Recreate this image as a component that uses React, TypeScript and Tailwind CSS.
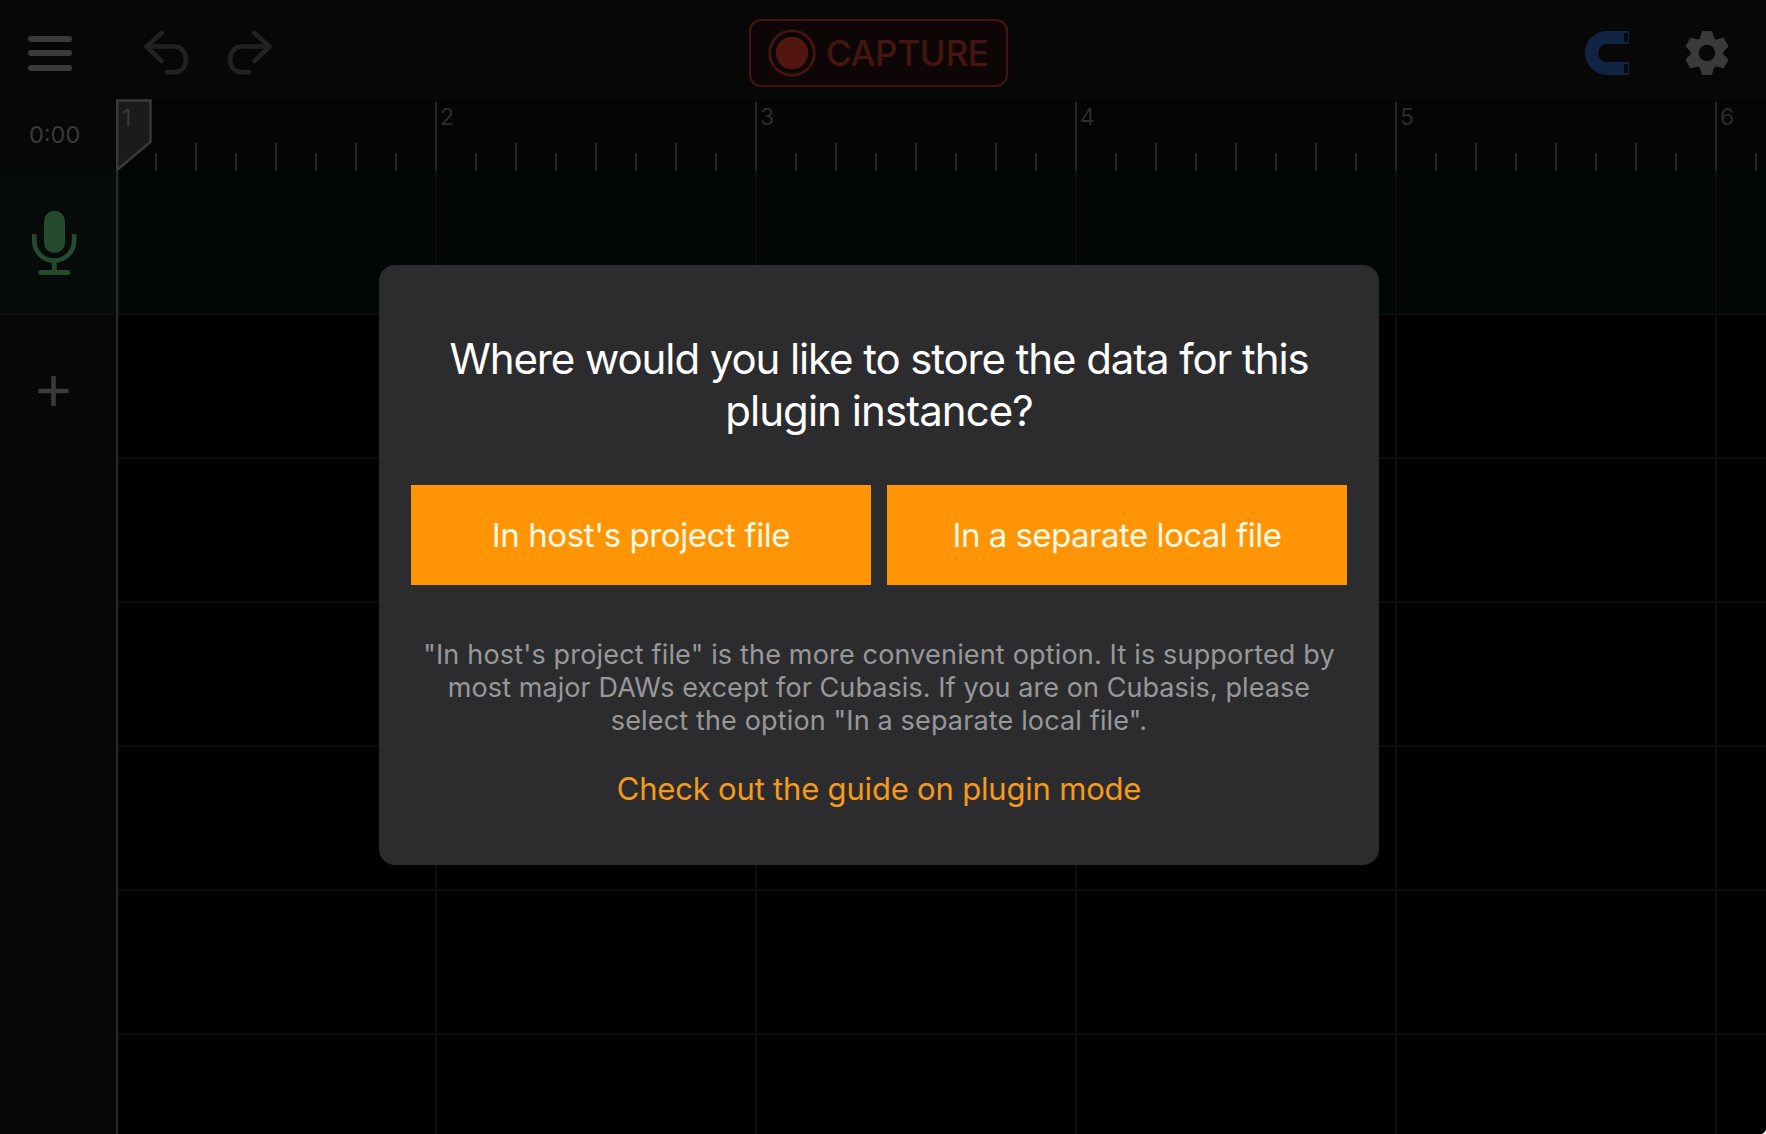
import React from "react";

const SUBDIVISIONS = Array.from({ length: 42 }, (_, i) => i);
const BARS = [1, 2, 3, 4, 5, 6];
const TRACKS = [0, 1, 2, 3, 4, 5, 6];
const GEAR_TEETH = [0, 60, 120, 180, 240, 300];

function UndoIcon({ flip = false }: { flip?: boolean }) {
  return (
    <svg width="46" height="46" viewBox="0 0 46 46" fill="none" stroke="#222222" strokeWidth="4.6" strokeLinecap="round" strokeLinejoin="round" className={flip ? "-scale-x-100" : ""}>
      <path d="M18.5 3 L3.5 16.5 L18.5 31" strokeLinejoin="miter" />
      <path d="M4 16.5 H31 C38 16.5 43 22 43 29.5 C43 37 38 42.3 30.5 42.3 H24" />
    </svg>
  );
}

function CaptureButton() {
  return (
    <button className="flex h-[68px] w-[259px] items-center rounded-[12px] border-2 border-[#451512] bg-[#0e0606] pl-[16.5px]">
      <svg width="48" height="48" viewBox="0 0 48 48">
        <circle cx="24" cy="24" r="22.3" fill="none" stroke="#451512" strokeWidth="2.6" />
        <circle cx="24" cy="24" r="16.2" fill="#521611" />
      </svg>
      <span className="ml-[10.5px] text-[35px] leading-none font-medium tracking-[-0.3px] text-[#451512]">CAPTURE</span>
    </button>
  );
}

function MagnetIcon() {
  return (
    <svg width="44" height="44" viewBox="0 0 44 44">
      <path
        fill="#122444"
        fillRule="evenodd"
        d="M21.5 0 H44 V13 H20.5 A9.2 9.2 0 0 0 20.5 31 H44 V44 H21.5 A21.5 22 0 0 1 21.5 0 Z M39 2 V11 H42.8 V2 Z M39 33 V42 H42.8 V33 Z"
      />
    </svg>
  );
}

function GearIcon() {
  return (
    <svg width="46" height="46" viewBox="-23 -23 46 46" fill="#3a3a3b" stroke="#3a3a3b" strokeLinejoin="round">
      <circle r="12.3" fill="none" strokeWidth="8" />
      {GEAR_TEETH.map((angle) => (
        <path key={angle} transform={`rotate(${angle})`} strokeWidth="2" d="M-4.3 -21 H4.3 L6.2 -14 H-6.2 Z" />
      ))}
    </svg>
  );
}

function Toolbar() {
  return (
    <header className="flex h-[99px] shrink-0 items-center bg-[#070707] pt-[7px] pr-[36px] pl-[28px]">
      <div className="flex w-[44px] flex-col gap-[8.5px]">
        <div className="h-[6px] rounded-full bg-[#3a3a3b]" />
        <div className="h-[6px] rounded-full bg-[#3a3a3b]" />
        <div className="h-[6px] rounded-full bg-[#3a3a3b]" />
      </div>
      <div className="ml-[71px] flex gap-[38px]">
        <UndoIcon />
        <UndoIcon flip />
      </div>
      <div className="ml-[476px]">
        <CaptureButton />
      </div>
      <div className="ml-auto flex items-center gap-[55px]">
        <MagnetIcon />
        <GearIcon />
      </div>
    </header>
  );
}

function Ruler() {
  return (
    <div className="h-[72px] flex-1 overflow-hidden bg-[#050505]">
      <div className="flex h-full items-end">
        {SUBDIVISIONS.map((i) => (
          <div key={i} className="flex h-full w-[40px] shrink-0 items-end">
            {i % 8 === 0 ? (
              <div className="flex h-[69px] items-start">
                <div className={i === 0 ? "h-full w-[2px]" : "h-full w-[2px] bg-[#252525]"} />
                <span className="mt-[3px] ml-[3px] text-[23px] leading-[24px] text-[#2c2c2c]">{i === 0 ? "" : BARS[i / 8]}</span>
              </div>
            ) : (
              <div className={i % 2 === 0 ? "h-[28px] w-[2px] bg-[#252525]" : "h-[18px] w-[2px] bg-[#252525]"} />
            )}
          </div>
        ))}
      </div>
    </div>
  );
}

function MicIcon() {
  return (
    <svg width="46" height="68" viewBox="0 0 46 68">
      <rect x="13" y="2.7" width="21" height="42.3" rx="10.5" fill="#254a2e" />
      <path d="M3.3 26 V32.7 A19.9 19.9 0 0 0 43.1 32.7 V26" fill="none" stroke="#254a2e" strokeWidth="4.6" />
      <path d="M23.3 54 V64" stroke="#254a2e" strokeWidth="5" />
      <path d="M9.8 64.5 H36.8" stroke="#254a2e" strokeWidth="5" strokeLinecap="round" />
    </svg>
  );
}

function StorageDialog() {
  return (
    <section role="dialog" className="absolute top-[265px] left-[379px] flex h-[600px] w-[1000px] flex-col items-center rounded-[16px] bg-[#2c2c2e] px-[32px] pt-[68px] text-center">
      <h1 className="text-[42px] leading-[52px] text-white">
        <span className="block whitespace-nowrap tracking-[-1.1px]">Where would you like to store the data for this</span>
        <span className="block whitespace-nowrap tracking-[-0.95px]">plugin instance?</span>
      </h1>
      <div className="mt-[48px] grid w-full grid-cols-2 gap-[16px]">
        <button className="h-[100px] bg-[#ff9505] pt-px text-[33px] tracking-[-0.4px] text-[#fffae6]">In host's project file</button>
        <button className="h-[100px] bg-[#ff9505] pt-px text-[33px] tracking-[-0.52px] text-[#fffae6]">In a separate local file</button>
      </div>
      <p className="mt-[53px] text-[27px] leading-[33px] text-[#98989b]">
        <span className="block whitespace-nowrap tracking-[0.17px]">"In host's project file" is the more convenient option. It is supported by</span>
        <span className="block whitespace-nowrap tracking-[0.08px]">most major DAWs except for Cubasis. If you are on Cubasis, please</span>
        <span className="block whitespace-nowrap tracking-[0.15px]">select the option "In a separate local file".</span>
      </p>
      <a className="mt-[33px] text-[31px] leading-[38px] tracking-[-0.19px] text-[#f59a1c]">Check out the guide on plugin mode</a>
    </section>
  );
}

export default function App() {
  return (
    <main className="relative flex h-[1134px] w-[1766px] flex-col overflow-hidden rounded-br-[6px] bg-black font-[Inter,'Liberation_Sans',sans-serif]">
      <Toolbar />
      <div className="flex h-[72px] shrink-0">
        <div className="flex w-[115px] items-center bg-[#070707] pl-[29px] text-[23.5px] text-[#3a3a3a]">0:00</div>
        <Ruler />
      </div>
      <div className="flex min-h-0 flex-1">
        <aside className="flex w-[115px] flex-col bg-[#070707]">
          <div className="flex h-[144px] items-center border-b-2 border-[#0a0f0c] bg-[#060b09] pl-[31px]">
            <MicIcon />
          </div>
          <div className="mt-[61px] ml-[38px]">
            <svg width="31" height="30" viewBox="0 0 31 30" stroke="#3a3a3b" strokeWidth="4.6">
              <path d="M0.3 15 H30.6 M15.5 0 V30" />
            </svg>
          </div>
        </aside>
        <div className="relative flex-1 overflow-hidden">
          {TRACKS.map((t) => (
            <div key={t} className={t === 0 ? "h-[144px] border-b-2 border-[#08100d] bg-[#020706]" : "h-[144px] border-b-2 border-[#0b0b0b] bg-[#010101]"} />
          ))}
          <div className="absolute inset-0 flex">
            {BARS.map((b) => (
              <div key={b} className="w-[320px] shrink-0 border-l-2 border-[#0b0c0b]" />
            ))}
          </div>
        </div>
      </div>
      <svg className="absolute top-[99px] left-[115px]" width="40" height="1035" viewBox="0 0 40 1035">
        <path d="M2.2 1.5 H35.5 V43 L2.2 71 Z" fill="#1b1b1b" stroke="#3a3a3a" strokeWidth="2.4" />
        <path d="M2.2 72 V1035" stroke="#262626" strokeWidth="2.4" />
      </svg>
      <span className="absolute top-[106px] left-[122px] text-[23px] leading-[24px] text-[#3a3a3a]">1</span>
      <StorageDialog />
    </main>
  );
}
